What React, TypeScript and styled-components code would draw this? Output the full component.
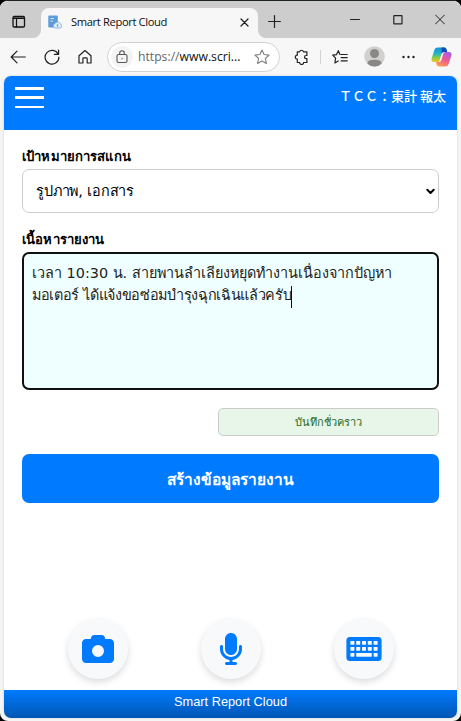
import React from 'react';
import styled, { createGlobalStyle, css } from 'styled-components';
import { FaCamera, FaMicrophone } from 'react-icons/fa6';

const GlobalStyle = createGlobalStyle`
  *, *::before, *::after { box-sizing: border-box; }
  body { margin: 0; background: #000; }
`;

const thai = '"DejaVu Sans", "Noto Sans", sans-serif';
const ui = '"Open Sans", "Noto Sans", sans-serif';

const Window = styled.div`
  width: 461px;
  height: 721px;
  overflow: hidden;
  display: flex;
  flex-direction: column;
  background: #f5f5f5;
  border-top: 1px solid #1d241f;
  border-radius: 8px;
  color: #111;
`;

const TabStrip = styled.div`
  height: 37px;
  flex: none;
  display: flex;
  background: #f7f7f7;
`;

const TabActions = styled.div`
  width: 41px;
  padding: 14px 0 0 12px;
  background: #cdcdcd;
  border-bottom-right-radius: 8px;
`;

const TabSlot = styled.div`
  width: 217px;
  padding-top: 7px;
  background: linear-gradient(#cdcdcd 24px, #f7f7f7 24px);
`;

const Tab = styled.div`
  height: 30px;
  padding: 0 9px 2px 7px;
  display: flex;
  align-items: center;
  background: #f7f7f7;
  border-radius: 8px 8px 0 0;
`;

const TabTitle = styled.span`
  flex: 1;
  margin-left: 9px;
  font: 11.2px/16px ${ui};
  letter-spacing: -0.37px;
  white-space: nowrap;
`;

const WindowControls = styled.div`
  flex: 1;
  display: flex;
  justify-content: space-between;
  padding: 14px 16px 0 10px;
  border-bottom-left-radius: 8px;
  background: #cdcdcd;
`;

const ControlGroup = styled.div`
  width: 95px;
  height: 11px;
  margin-top: -1px;
  display: flex;
  justify-content: space-between;
`;

const Toolbar = styled.div`
  height: 38px;
  flex: none;
  display: flex;
  align-items: center;
  padding: 0 9px 1px 10px;
  background: #f7f7f7;
`;

const NavButtons = styled.div`
  width: 83px;
  display: flex;
  justify-content: space-between;
`;

const AddressBar = styled.div`
  width: 173px;
  height: 30px;
  margin-left: 14px;
  padding: 0 9px 0 3px;
  display: flex;
  align-items: center;
  background: #fff;
  border: 1px solid #d2d2d2;
  border-radius: 15px;
`;

const LockBadge = styled.span`
  width: 22px;
  height: 22px;
  flex: none;
  display: grid;
  place-items: center;
  background: #f4f4f4;
  border-radius: 50%;
`;

const Url = styled.span`
  flex: 1;
  margin-left: 5px;
  font: 12.2px/18px ${ui};
  white-space: nowrap;
`;

const Scheme = styled.span`
  color: #666;
`;

const ToolbarActions = styled.div`
  flex: 1;
  display: flex;
  align-items: center;
  justify-content: space-between;
  margin-left: 14px;
`;

const ExtensionGroup = styled.div`
  width: 54px;
  display: flex;
  align-items: center;
  justify-content: space-between;
`;

const Divider = styled.span`
  width: 1px;
  height: 14px;
  background: #d3d3d3;
`;

const Page = styled.div`
  width: 453px;
  height: 642px;
  margin-left: 4px;
  flex: none;
  display: flex;
  flex-direction: column;
  overflow: hidden;
  background: #fff;
  border-radius: 7px;
  box-shadow: 0 0 2px rgba(0, 0, 0, 0.22);
`;

const Header = styled.header`
  height: 54px;
  flex: none;
  display: flex;
  justify-content: space-between;
  padding: 11px 11px 0 11px;
  background: #007bff;
`;

const MenuButton = styled.div`
  width: 29px;
  height: 21px;
  display: flex;
  flex-direction: column;
  justify-content: space-between;
`;

const MenuLine = styled.span`
  height: 2.500px;
  background: #fff;
`;

const UserName = styled.div`
  margin-top: -1px;
  font: 500 13px/20px "Noto Sans CJK JP", sans-serif;
  white-space: nowrap;
  color: #fff;
`;

const Form = styled.main`
  flex: 1;
  display: flex;
  flex-direction: column;
  padding: 17px 18px 0;
`;

const Label = styled.label<{ $gap?: number }>`
  height: 20px;
  margin-top: ${(p) => p.$gap ?? 0}px;
  font: bold 13.1px/20px ${thai};
  letter-spacing: 0.13px;
  white-space: nowrap;
  color: #000;
`;

const SelectBox = styled.div`
  height: 44px;
  margin-top: 2px;
  padding: 0 3px 0 13px;
  display: flex;
  align-items: center;
  justify-content: space-between;
  border: 1px solid #ccc;
  border-radius: 7px;
  font: 14.4px/22px ${thai};
  letter-spacing: -0.15px;
  color: #000;
`;

const Report = styled.div`
  height: 138px;
  margin-top: 2px;
  padding: 8px 8px;
  background: #efffff;
  border: 2px solid #101010;
  border-radius: 7px;
  color: #222;
`;

const ReportLine = styled.div<{ $spacing?: number }>`
  height: 22px;
  display: flex;
  align-items: center;
  font: 14.4px/22px ${thai};
  letter-spacing: ${(p) => p.$spacing ?? 0}px;
  white-space: nowrap;
`;

const Caret = styled.span`
  width: 1px;
  height: 22px;
  margin-top: 3px;
  background: #111;
`;

const buttonText = css`
  display: flex;
  align-items: center;
  justify-content: center;
  white-space: nowrap;
`;

const DraftButton = styled.div`
  ${buttonText}
  width: 221px;
  height: 28px;
  margin: 18px 0 0 auto;
  padding-top: 2px;
  background: #e8f5e9;
  border: 1px solid #ccc;
  border-radius: 5px;
  font: 11px/16px ${thai};
  color: #1f6b24;
`;

const SubmitButton = styled.div`
  ${buttonText}
  height: 49px;
  margin-top: 18px;
  padding-top: 2px;
  background: #007bff;
  border-radius: 7px;
  font: bold 15.500px/22px ${thai};
  color: #fff;
`;

const InputModes = styled.nav`
  display: flex;
  justify-content: space-between;
  padding: 0 63.500px 10.500px;
`;

const ModeButton = styled.div`
  width: 60px;
  height: 60px;
  display: grid;
  place-items: center;
  background: #f8f9fa;
  border-radius: 50%;
  box-shadow: 0 3px 7px rgba(0, 0, 0, 0.14);
  color: #007bff;
`;

const Footer = styled.footer`
  height: 28.500px;
  flex: none;
  background: linear-gradient(#007bff, #0056b3);
  font: 12.8px/23px "Liberation Sans", Arial, sans-serif;
  text-align: center;
  color: #fff;
`;

type LineIconProps = { w: number; h: number; stroke?: string; weight?: number; children: React.ReactNode };

const LineIcon = ({ w, h, stroke = '#222', weight = 1.2, children }: LineIconProps) => (
  <svg
    width={w}
    height={h}
    viewBox={`0 0 ${w} ${h}`}
    fill="none"
    stroke={stroke}
    strokeWidth={weight}
    strokeLinecap="round"
    strokeLinejoin="round"
  >
    {children}
  </svg>
);

const Favicon = () => (
  <svg width="14" height="14" viewBox="0 0 14 14">
    <rect x="0.300" y=".5" width="9.500" height="12" rx="1" fill="#5b9bdc" />
    <path d="M2.500 3.500h3.500M2.500 6h2.500" stroke="#cfe3f7" strokeWidth="1.200" />
    <path
      d="M7 13a2.200 2.200 0 0 1-.2-4.200A2.800 2.800 0 0 1 12 8.700 2.200 2.200 0 0 1 12 13z"
      fill="#e6f1fb"
      stroke="#76a9dd"
      strokeWidth=".8"
    />
    <path d="M9.500 12V9.500M8.400 10.500l1.100-1.100 1.100 1.100" stroke="#5b9bdc" strokeWidth=".8" fill="none" />
  </svg>
);

const Copilot = () => (
  <svg width="21" height="20" viewBox="0 0 21 20">
    <defs>
      <linearGradient id="cool" x1="0" y1="0" x2="0" y2="1">
        <stop offset="0" stopColor="#168fdf" />
        <stop offset=".4" stopColor="#1bb5c9" />
        <stop offset=".7" stopColor="#8bcb47" />
        <stop offset="1" stopColor="#f5c31d" />
      </linearGradient>
      <linearGradient id="warm" x1="0.7" y1="0" x2="0.3" y2="1">
        <stop offset="0" stopColor="#a55bea" />
        <stop offset=".5" stopColor="#ed5b93" />
        <stop offset="1" stopColor="#ff9a50" />
      </linearGradient>
    </defs>
    <path d="M7 .5h6.200c1.200 0 2 .8 2.300 2l.7 2.400h-3.100c-1.400 0-2.200.8-2.600 2.200L8.600 13.200C8.200 14.500 7.500 15 6.300 15H3C.9 15 .1 13.500.6 11.600L3.400 3C3.900 1.300 5.200.5 7 .5z" fill="url(#cool)" />
    <path d="M10.500.5h2.700c1.200 0 2 .8 2.300 2l.7 2.400h-3.100c-1.400 0-2.200.8-2.600 1.600z" fill="#154bb8" />
    <path d="M14 19.500H8c-1.300 0-2-.8-2.400-2L5 15h2.800c1.300 0 2.200-.7 2.600-2.100l1.900-6.100c.4-1.300 1.200-1.900 2.400-1.900H18c2.100 0 2.900 1.500 2.400 3.500L17.600 17c-.5 1.700-1.800 2.500-3.600 2.500z" fill="url(#warm)" />
  </svg>
);

const keyColumns = [4, 9.8, 15.6, 21.4, 27.2];

const Keyboard = () => (
  <svg width="36" height="24" viewBox="0 0 35.200 24">
    <rect width="35.200" height="24" rx="3.500" fill="#007bff" />
    <g fill="#f8f9fa">
      {keyColumns.map((x) => (
        <rect key={`a${x}`} x={x} y="4" width="4" height="3.800" rx=".6" />
      ))}
      {keyColumns.map((x) => (
        <rect key={`b${x}`} x={x} y="9.900" width="4" height="3.800" rx=".6" />
      ))}
      <rect x="4" y="15.900" width="4" height="3.800" rx=".6" />
      <rect x="9.800" y="15.900" width="15.600" height="3.800" rx=".6" />
      <rect x="27.200" y="15.900" width="4" height="3.800" rx=".6" />
    </g>
  </svg>
);

export default function App() {
  return (
    <>
      <GlobalStyle />
      <Window>
        <TabStrip>
          <TabActions>
            <LineIcon w={14} h={14} stroke="#111" weight={1.3}>
              <rect x="1" y="1.500" width="11.500" height="10.500" rx="1.200" />
              <path d="M1.500 3.200h10.500" strokeWidth="1.600" />
              <path d="M4.500 4v8" strokeWidth="1.200" />
            </LineIcon>
          </TabActions>
          <TabSlot>
            <Tab>
              <Favicon />
              <TabTitle>Smart Report Cloud</TabTitle>
              <LineIcon w={9} h={9} weight={1.3}>
                <path d="M1 1l7 7M8 1l-7 7" />
              </LineIcon>
            </Tab>
          </TabSlot>
          <WindowControls>
            <LineIcon w={13} h={13}>
              <path d="M.6 6.500h11.800M6.500.6v11.800" />
            </LineIcon>
            <ControlGroup>
              <LineIcon w={10} h={11} weight={1}>
                <path d="M.5 5.500h9" />
              </LineIcon>
              <LineIcon w={10} h={11}>
                <rect x=".8" y="1.600" width="8.200" height="8.200" rx=".4" />
              </LineIcon>
              <LineIcon w={10} h={11} weight={1}>
                <path d="M.5 1l9 9M9.500 1l-9 9" />
              </LineIcon>
            </ControlGroup>
          </WindowControls>
        </TabStrip>

        <Toolbar>
          <NavButtons>
            <LineIcon w={16} h={16}>
              <path d="M15.300 8H1.200M7 2.200L1.200 8 7 13.800" />
            </LineIcon>
            <LineIcon w={16} h={16}>
              <path d="M14.200 5.200A6.900 6.900 0 1 0 14.900 8M14.600 1.200v4.200h-4.200" />
            </LineIcon>
            <LineIcon w={16} h={16}>
              <path d="M2 6.700L8 1.500l6 5.200v7.300h-3.800V9.700c0-.5-.3-.8-.8-.8H6.700c-.5 0-.8.3-.8.8V14H2z" />
            </LineIcon>
          </NavButtons>
          <AddressBar>
            <LockBadge>
              <LineIcon w={12} h={14} stroke="#555" weight={1.1}>
                <rect x="1" y="4.500" width="10" height="8" rx="1.500" />
                <path d="M3.700 4.500V3a2.300 2.300 0 0 1 4.600 0v1.500M6 8.300v.4" />
              </LineIcon>
            </LockBadge>
            <Url>
              <Scheme>https://</Scheme>www.scri...
            </Url>
            <LineIcon w={16} h={16} stroke="#808080" weight={1.1}>
              <path d="M8 1l2.100 4.500 5 .6-3.700 3.400 1 4.900L8 12l-4.400 2.400 1-4.900L.9 6.100l5-.6z" />
            </LineIcon>
          </AddressBar>
          <ToolbarActions>
            <ExtensionGroup>
              <LineIcon w={15} h={16}>
                <path d="M3.300 2.800h2.300a2 2 0 0 1 3.900 0h3.400v3.700h-.8a1.600 1.600 0 0 0 0 3.200h.8v3.800H9.600a2 2 0 0 1-4 0H3.300v-3.300a2 2 0 0 1 0-4z" />
              </LineIcon>
              <Divider />
              <LineIcon w={16} h={16}>
                <path d="M8 5.500L6.300 1.700 4.600 5.600.7 6.200l2.900 2.900L2.900 14l3.300-2M9.200 5.500h6M9.200 8.700h6M9.200 11.900h6" />
              </LineIcon>
            </ExtensionGroup>
            <svg width="21" height="21" viewBox="0 0 21 21">
              <circle cx="10.500" cy="10.500" r="10.300" fill="#d2d0ce" />
              <circle cx="10.500" cy="7.500" r="4.500" fill="#8a8886" />
              <path d="M3.500 17.700c0-3 2.200-4 7-4s7 1 7 4a10.200 10.200 0 0 1-14 0z" fill="#8a8886" />
            </svg>
            <svg width="13" height="4" viewBox="0 0 13 4" fill="#222">
              <circle cx="1.500" cy="2" r="1.200" />
              <circle cx="6.500" cy="2" r="1.200" />
              <circle cx="11.500" cy="2" r="1.200" />
            </svg>
            <Copilot />
          </ToolbarActions>
        </Toolbar>

        <Page>
          <Header>
            <MenuButton>
              <MenuLine />
              <MenuLine />
              <MenuLine />
            </MenuButton>
            <UserName>ＴＣＣ：東計 報太</UserName>
          </Header>
          <Form>
            <Label>เป้าหมายการสแกน</Label>
            <SelectBox>
              รูปภาพ, เอกสาร
              <LineIcon w={9} h={7} stroke="#000" weight={2}>
                <path d="M1.300 1.800l3.200 3.200 3.200-3.200" />
              </LineIcon>
            </SelectBox>
            <Label $gap={17}>เนื้อหารายงาน</Label>
            <Report>
              <ReportLine>เวลา 10:30 น. สายพานลำเลียงหยุดทำงานเนื่องจากปัญหา</ReportLine>
              <ReportLine $spacing={-0.33}>
                มอเตอร์ ได้แจ้งขอซ่อมบำรุงฉุกเฉินแล้วครับ
                <Caret />
              </ReportLine>
            </Report>
            <DraftButton>บันทึกชั่วคราว</DraftButton>
            <SubmitButton>สร้างข้อมูลรายงาน</SubmitButton>
          </Form>
          <InputModes>
            <ModeButton>
              <FaCamera size={32} />
            </ModeButton>
            <ModeButton>
              <FaMicrophone size={32} />
            </ModeButton>
            <ModeButton>
              <Keyboard />
            </ModeButton>
          </InputModes>
          <Footer>Smart Report Cloud</Footer>
        </Page>
      </Window>
    </>
  );
}
